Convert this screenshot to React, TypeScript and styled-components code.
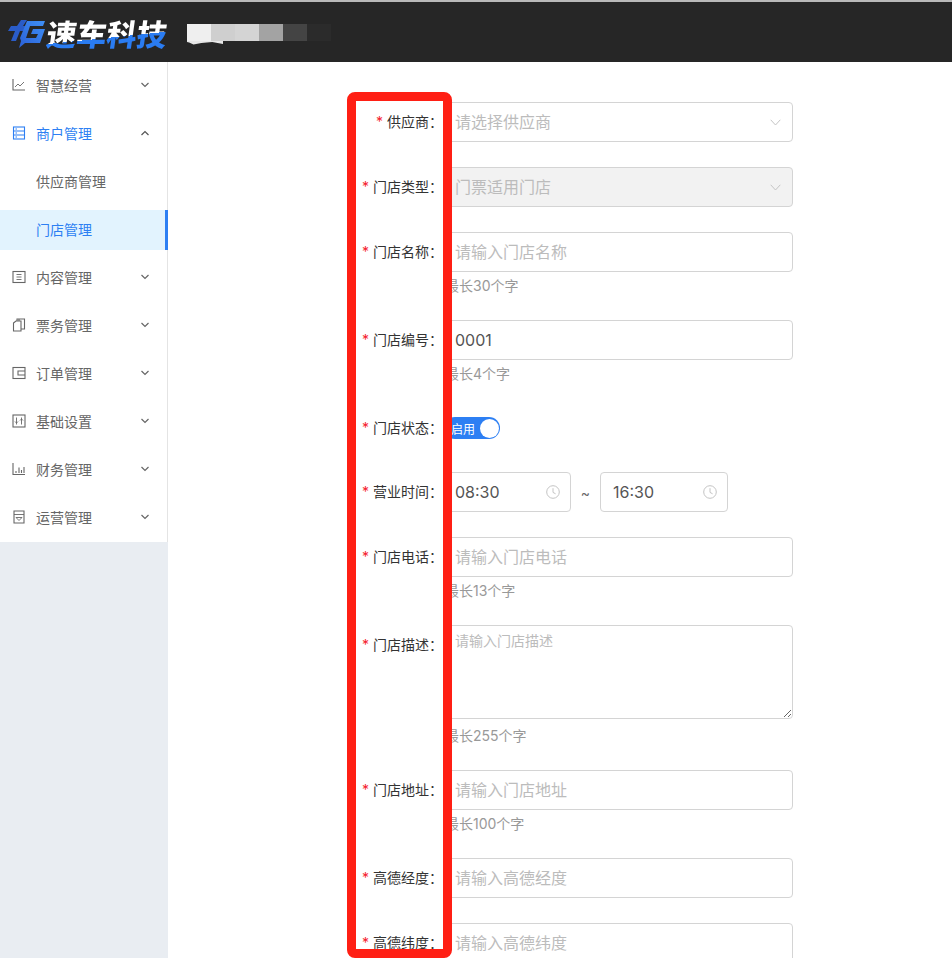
import React from 'react';
import styled, { createGlobalStyle } from 'styled-components';

const FONT = 'Inter, "Noto Sans CJK SC", "Noto Sans", sans-serif';

const GlobalStyle = createGlobalStyle`
  html, body {
    margin: 0;
    height: 958px;
    overflow: hidden;
    background: #fff;
    font-family: ${FONT};
  }
  * { box-sizing: border-box; }
`;

const Page = styled.div`
  position: relative;
  width: 952px;
  height: 958px;
  overflow: hidden;
`;

const Header = styled.header`
  height: 62px;
  display: flex;
  align-items: center;
  padding: 2px 0 0 8px;
  background: #262626;
  border-top: 2px solid #b9b9b9;
`;

const LogoText = styled.span`
  width: 122px;
  margin-left: 2px;
  font-family: "Noto Sans CJK SC", sans-serif;
  font-size: 30px;
  line-height: 36px;
  font-weight: 900;
  white-space: nowrap;
  transform: skewX(-8deg);
  color: transparent;
  background: linear-gradient(174deg, #fff 60%, #2a7cf2 60%);
  -webkit-background-clip: text;
  background-clip: text;
`;

const Mosaic = styled.div`
  position: relative;
  display: flex;
  margin: 0 0 2px 18px;

  &::after {
    content: '';
    position: absolute;
    left: 0;
    top: 17px;
    width: 36px;
    height: 4px;
    background: #e6e6e6;
    clip-path: polygon(0 0, 100% 0, 100% 90%, 70% 40%, 40% 60%, 18% 100%, 6% 50%, 0 40%);
  }
`;

const MosaicCell = styled.i<{ $c: string }>`
  display: block;
  width: 24px;
  height: 17px;
  background: ${(p) => p.$c};
`;

const Body = styled.div`
  display: flex;
  height: 896px;
`;

const Side = styled.aside`
  width: 168px;
  flex: none;
  background: #e9edf2;
`;

const Menu = styled.nav`
  display: flex;
  flex-direction: column;
  background: #fff;
  border-right: 1px solid #e4e4e4;
`;

const MenuRow = styled.div<{ $on?: boolean }>`
  height: 48px;
  display: flex;
  align-items: center;
  padding: 0 17px 2px 12px;
  font-size: 14px;
  color: ${(p) => (p.$on ? '#2d7ff3' : '#666')};
  svg.icon { margin-right: 10px; flex: none; }
  svg.arrow { margin-left: auto; flex: none; }
`;

const SubRow = styled.div<{ $on?: boolean }>`
  height: 40px;
  margin: 4px -1px 4px 0;
  padding: 0 0 2px 36px;
  display: flex;
  align-items: center;
  font-size: 14px;
  color: ${(p) => (p.$on ? '#2d7ff3' : '#666')};
  background: ${(p) => (p.$on ? '#e2f3fe' : 'transparent')};
  border-right: 3px solid ${(p) => (p.$on ? '#2d7ff3' : 'transparent')};
`;

const Main = styled.main`
  flex: 1;
  padding: 40px 0 0 173px;
`;

const Row = styled.div<{ $gap?: number }>`
  display: flex;
  margin-bottom: ${(p) => p.$gap ?? 25}px;
`;

const Label = styled.label`
  width: 103px;
  flex: none;
  padding-right: 1px;
  text-align: right;
  font-size: 14px;
  line-height: 40px;
  color: #333;
  white-space: nowrap;
`;

const Star = styled.span`
  margin-right: 4px;
  color: #f5222d;
`;

const Field = styled.div`
  width: 349px;
`;

const Input = styled.input`
  display: block;
  width: 100%;
  height: 40px;
  padding: 0 10px;
  border: 1px solid #d4d4d4;
  border-radius: 4px;
  outline: none;
  font: 16px ${FONT};
  color: #555;
  background: ${(p) => (p.disabled ? '#f2f2f2' : '#fff')};
  &::placeholder { color: #bcbcbc; opacity: 1; }
`;

const Area = styled.textarea`
  display: block;
  width: 100%;
  height: 94px;
  padding: 4px 10px;
  border: 1px solid #d4d4d4;
  border-radius: 4px;
  outline: none;
  font: 14px/21px ${FONT};
  &::placeholder { color: #bcbcbc; opacity: 1; }
`;

const Hint = styled.div<{ $top?: number }>`
  height: 23px;
  margin-top: ${(p) => p.$top ?? 0}px;
  padding-left: 1px;
  font-size: 14px;
  line-height: 28px;
  color: #999;
`;

const SelectBox = styled.div`
  position: relative;
  svg {
    position: absolute;
    top: 17px;
    right: 12px;
  }
`;

const TimeRow = styled.div`
  display: flex;
  align-items: center;
`;

const TimeBox = styled.div<{ $w: number; $pad: number }>`
  position: relative;
  width: ${(p) => p.$w}px;
  input { padding-left: ${(p) => p.$pad}px; }
  svg {
    position: absolute;
    top: 13px;
    right: 11px;
  }
`;

const Tilde = styled.span`
  width: 29px;
  text-align: center;
  font-size: 14px;
  color: #666;
`;

const SwitchLine = styled.div`
  height: 40px;
  display: flex;
  align-items: center;
`;

const SwitchBody = styled.div`
  width: 56px;
  height: 22px;
  padding: 0 1px 0 7px;
  display: flex;
  align-items: center;
  justify-content: space-between;
  border-radius: 11px;
  background: #2d7ff3;
  font-size: 12px;
  color: #fff;
`;

const Knob = styled.i`
  width: 19px;
  height: 19px;
  border-radius: 50%;
  background: #fff;
`;

const RedFrame = styled.div`
  position: absolute;
  left: 347px;
  top: 92px;
  width: 105px;
  height: 866px;
  border: 9px solid #ff1f14;
  border-radius: 8px;
  pointer-events: none;
`;

function LogoMark() {
  return (
    <svg width="37" height="29" viewBox="0 0 37 29">
      <defs>
        <linearGradient id="lg" x1="0" y1="1" x2="1" y2="0">
          <stop offset="0" stopColor="#2a5fd6" />
          <stop offset="1" stopColor="#3f90f6" />
        </linearGradient>
      </defs>
      <path d="M13 1 H19 L15 7 H19 L17 12 H12 L8 22 H3 L7 12 H0 L3 7 H9 Z" fill="#2a5cc8" />
      <path d="M19 2 H37 L35 7 H22 L18 19 H28 L30 15 H23 L25 10 H37 L32 24 H17 L11 29 L13 22 L12 19 Z" fill="url(#lg)" />
    </svg>
  );
}

const Chevron = ({ up }: { up?: boolean }) => (
  <svg className="arrow" width="10" height="6" viewBox="0 0 10 6" fill="none" stroke={up ? '#555' : '#666'} strokeWidth="1.2">
    <path d={up ? 'M1.5 5 L5 1.5 L8.5 5' : 'M1.5 1 L5 4.5 L8.5 1'} />
  </svg>
);

const icons: Record<string, React.ReactNode> = {
  chart: (
    <>
      <path d="M1 1 V12 H13" />
      <path d="M3 9 L6 6 L8 8 L12 4" strokeWidth="0.9" />
    </>
  ),
  store: (
    <>
      <rect x="1.5" y="1" width="11" height="12" />
      <path d="M1.5 5 H12.5 M1.5 9 H12.5" />
      <path d="M3.5 3 H5 M3.5 7 H5 M3.5 11 H5" />
    </>
  ),
  content: (
    <>
      <rect x="1" y="1.5" width="12" height="11" />
      <path d="M4.5 4.5 H9.5 M4.5 7 H9.5 M4.5 9.5 H9.5" strokeWidth="0.9" />
    </>
  ),
  ticket: (
    <>
      <path d="M1.5 5 L4 3 H9 V13 H1.5 Z" />
      <path d="M5 3 V1 H12.5 V11 H9" />
      <path d="M7 1 V3" />
    </>
  ),
  order: (
    <>
      <rect x="1" y="1.5" width="12" height="11" />
      <path d="M13 5 H6 V9 H13" />
    </>
  ),
  settings: (
    <>
      <rect x="1" y="1" width="12" height="12" />
      <path d="M4.5 3.5 V10.5 M9.5 3.5 V10.5 M3 7.5 L4.5 9 L6 7.5 M8 6.5 L9.5 5 L11 6.5" strokeWidth="0.9" />
    </>
  ),
  finance: (
    <>
      <path d="M1 1 V12.5 H13" />
      <path d="M4 11 V9 M7 11 V5.5 M9.5 11 V8 M12 11 V5" />
    </>
  ),
  ops: (
    <>
      <path d="M2 1 H12 V13 H2 Z" />
      <path d="M2 4.5 H12 M4 7.5 H10 L7 10.5 Z" strokeWidth="0.9" />
    </>
  ),
};

const MenuIcon = ({ name, color }: { name: string; color: string }) => (
  <svg className="icon" width="14" height="14" viewBox="0 0 14 14" fill="none" stroke={color} strokeWidth="1.1">
    {icons[name]}
  </svg>
);

const Clock = () => (
  <svg width="14" height="14" viewBox="0 0 14 14" fill="none" stroke="#c4c4c4" strokeWidth="1">
    <circle cx="7" cy="7" r="6.3" />
    <path d="M7 3.2 V7.4 L9.6 8.8" />
  </svg>
);

const SelectArrow = () => (
  <svg width="11" height="7" viewBox="0 0 11 7" fill="none" stroke="#c4c4c4" strokeWidth="1">
    <path d="M0.7 0.8 L5.5 6 L10.3 0.8" />
  </svg>
);

const mosaic = ['#efefef', '#cfcfcf', '#d4d4d4', '#a3a3a3', '#444444', '#2b2b2b'];

const menuAfter = [
  { name: 'content', text: '内容管理' },
  { name: 'ticket', text: '票务管理' },
  { name: 'order', text: '订单管理' },
  { name: 'settings', text: '基础设置' },
  { name: 'finance', text: '财务管理' },
  { name: 'ops', text: '运营管理' },
];

function FormLabel({ text }: { text: string }) {
  return (
    <Label>
      <Star>*</Star>
      {text}：
    </Label>
  );
}

export default function App() {
  return (
    <Page>
      <GlobalStyle />
      <Header>
        <LogoMark />
        <LogoText>速车科技</LogoText>
        <Mosaic>
          {mosaic.map((c) => (
            <MosaicCell key={c} $c={c} />
          ))}
        </Mosaic>
      </Header>
      <Body>
        <Side>
          <Menu>
            <MenuRow>
              <MenuIcon name="chart" color="#666" />
              智慧经营
              <Chevron />
            </MenuRow>
            <MenuRow $on>
              <MenuIcon name="store" color="#2d7ff3" />
              商户管理
              <Chevron up />
            </MenuRow>
            <SubRow>供应商管理</SubRow>
            <SubRow $on>门店管理</SubRow>
            {menuAfter.map((m) => (
              <MenuRow key={m.text}>
                <MenuIcon name={m.name} color="#666" />
                {m.text}
                <Chevron />
              </MenuRow>
            ))}
          </Menu>
        </Side>
        <Main>
          <Row>
            <FormLabel text="供应商" />
            <Field>
              <SelectBox>
                <Input readOnly placeholder="请选择供应商" />
                <SelectArrow />
              </SelectBox>
            </Field>
          </Row>
          <Row>
            <FormLabel text="门店类型" />
            <Field>
              <SelectBox>
                <Input disabled placeholder="门票适用门店" />
                <SelectArrow />
              </SelectBox>
            </Field>
          </Row>
          <Row>
            <FormLabel text="门店名称" />
            <Field>
              <Input readOnly placeholder="请输入门店名称" />
              <Hint>最长30个字</Hint>
            </Field>
          </Row>
          <Row>
            <FormLabel text="门店编号" />
            <Field>
              <Input readOnly value="0001" />
              <Hint>最长4个字</Hint>
            </Field>
          </Row>
          <Row $gap={24}>
            <FormLabel text="门店状态" />
            <SwitchLine>
              <SwitchBody>
                启用
                <Knob />
              </SwitchBody>
            </SwitchLine>
          </Row>
          <Row>
            <FormLabel text="营业时间" />
            <TimeRow>
              <TimeBox $w={127} $pad={10}>
                <Input readOnly value="08:30" />
                <Clock />
              </TimeBox>
              <Tilde>~</Tilde>
              <TimeBox $w={128} $pad={12}>
                <Input readOnly value="16:30" />
                <Clock />
              </TimeBox>
            </TimeRow>
          </Row>
          <Row>
            <FormLabel text="门店电话" />
            <Field>
              <Input readOnly placeholder="请输入门店电话" />
              <Hint>最长13个字</Hint>
            </Field>
          </Row>
          <Row>
            <FormLabel text="门店描述" />
            <Field>
              <Area readOnly placeholder="请输入门店描述" />
              <Hint $top={3}>最长255个字</Hint>
            </Field>
          </Row>
          <Row>
            <FormLabel text="门店地址" />
            <Field>
              <Input readOnly placeholder="请输入门店地址" />
              <Hint>最长100个字</Hint>
            </Field>
          </Row>
          <Row>
            <FormLabel text="高德经度" />
            <Field>
              <Input readOnly placeholder="请输入高德经度" />
            </Field>
          </Row>
          <Row>
            <FormLabel text="高德纬度" />
            <Field>
              <Input readOnly placeholder="请输入高德纬度" />
            </Field>
          </Row>
        </Main>
      </Body>
      <RedFrame />
    </Page>
  );
}
